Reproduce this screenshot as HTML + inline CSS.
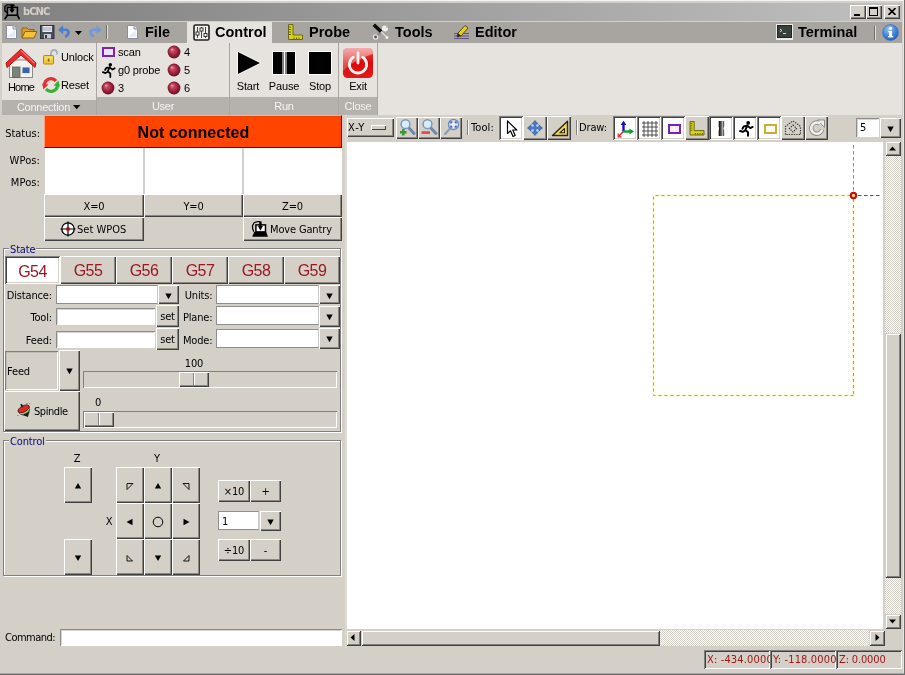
<!DOCTYPE html>
<html>
<head>
<meta charset="utf-8">
<title>bCNC</title>
<style>
html,body{margin:0;padding:0;}
body{width:905px;height:675px;overflow:hidden;background:#d4d0c8;font-family:"Liberation Sans",sans-serif;font-size:11px;color:#000;}
#win{position:relative;width:905px;height:675px;overflow:hidden;background:#d4d0c8;will-change:transform;}
#win div,#win span,#win svg{position:absolute;box-sizing:border-box;white-space:nowrap;}
.tah{font-family:"DejaVu Sans Condensed","Liberation Sans",sans-serif;font-size:11px;line-height:13px;letter-spacing:-0.15px;}
.ari{font-family:"Liberation Sans",sans-serif;font-size:11px;line-height:13px;letter-spacing:-0.15px;}
.btn{background:#d4d0c8;box-shadow:inset 1px 1px 0 #fff,inset -1px -1px 0 #404040,inset -2px -2px 0 #8c8880;}
.sunk{background:#fff;box-shadow:inset 1px 1px 0 #808080,inset -1px -1px 0 #fff,inset 2px 2px 0 #404040,inset -2px -2px 0 #d4d0c8;}
.sunkg{background:#d4d0c8;box-shadow:inset 1px 1px 0 #808080,inset -1px -1px 0 #fff,inset 2px 2px 0 #404040,inset -2px -2px 0 #d4d0c8;}
.entry{background:#fff;box-shadow:inset 1px 1px 0 #8c8c8c,inset -1px -1px 0 #fff,inset 2px 2px 0 #d8d5cf;}
.cb{background:#fff;border:1px solid #8e8e8e;border-right-color:#c8c8c8;}
.c{text-align:center;}
.r{text-align:right;}
.tab{font-family:"Liberation Sans",sans-serif;font-weight:bold;font-size:14.5px;line-height:17px;color:#000;}
.glab{font-family:"Liberation Sans",sans-serif;font-size:11px;line-height:13px;color:#f4f4f4;text-align:center;letter-spacing:-0.25px;}
.grp{border:1px solid #808080;box-shadow:inset 1px 1px 0 #fff,1px 1px 0 #fff;}
.grpl{color:#0a0a7a;background:#d4d0c8;padding:0 1px;}
.g5{font-family:"Liberation Sans",sans-serif;font-size:16px;line-height:18px;color:#9a1820;text-align:center;letter-spacing:-0.5px;}
.red{color:#a01818;}
.trough{background:#d4d0c8;box-shadow:inset 1px 1px 0 #808080,inset -1px -1px 0 #fff;}
.chk{background-color:#eae8e4;background-image:conic-gradient(#fff 25%,#d4d0c8 0 50%,#fff 0 75%,#d4d0c8 0);background-size:2px 2px;}
.sb{background:#d4d0c8;box-shadow:inset 1px 1px 0 #d4d0c8,inset -1px -1px 0 #404040,inset 2px 2px 0 #fff,inset -2px -2px 0 #808080;}
</style>
</head>
<body>
<div id="win">
<!-- TITLEBAR -->
<div id="title" style="left:2px;top:3px;width:900px;height:18px;background:linear-gradient(to right,#808080,#c0c0c0);"></div>
<span class="tah" style="left:23px;top:5px;font-weight:bold;font-size:11px;color:#d4d0c8;letter-spacing:-0.9px;">bCNC</span>
<svg style="left:4px;top:4px" width="16" height="16" viewBox="0 0 16 16"><path d="M3.3 8.6 L0.9 7 V2.6 L2.8 0.9 H9.6 L10.4 2.2" fill="none" stroke="#000" stroke-width="1.4" stroke-linejoin="round"/><rect x="3.4" y="3.4" width="10" height="7.8" fill="#8e8e8e" stroke="#000" stroke-width="1.6"/><path d="M6.6 0.8 H9.4 V5.4 H11 L8 9 L5 5.4 H6.6 Z" fill="#000"/><path d="M3.4 11.2 L0.6 15.2 M13.4 11.2 L15.4 15.2" stroke="#000" stroke-width="1.6"/></svg>
<div class="btn" style="left:850px;top:5px;width:16px;height:14px;"><div style="left:4px;top:9px;width:6px;height:2px;background:#000"></div></div>
<div class="btn" style="left:866px;top:5px;width:16px;height:14px;"><div style="left:3px;top:2px;width:9px;height:9px;border:1px solid #000;border-top:2px solid #000"></div></div>
<div class="btn" style="left:884px;top:5px;width:16px;height:14px;"><svg style="left:4px;top:3px" width="8" height="7" viewBox="0 0 8 7"><path d="M0.5 0 L7.5 7 M7.5 0 L0.5 7" stroke="#000" stroke-width="1.6"/></svg></div>
<!-- TABBAR -->
<div id="tabbar" style="left:2px;top:22px;width:900px;height:21px;background:#a8a5a1;"></div>
<!-- quick icons -->
<svg style="left:5px;top:25px" width="13" height="14" viewBox="0 0 13 14"><path d="M1.5 0.5 H8 L11.5 4 V13.5 H1.5 Z" fill="#fdfdff" stroke="#8a8fa0" stroke-width="1"/><path d="M8 0.5 V4 H11.5" fill="#dfe3ee" stroke="#8a8fa0" stroke-width="1"/><path d="M3 11 L10 5 V12 H3Z" fill="#dde2f0" opacity=".7"/></svg>
<svg style="left:21px;top:24px" width="17" height="15" viewBox="0 0 17 15"><path d="M9 2 C10 0.5 13 0.5 14 2.5" fill="none" stroke="#9aa0a8" stroke-width="1.2"/><path d="M1 14 V4 H6 L7.5 5.5 H13 V8" fill="#e0a020" stroke="#8a6408" stroke-width="1"/><path d="M1 14 L4 7.5 H16 L13 14 Z" fill="#f4c040" stroke="#8a6408" stroke-width="1"/></svg>
<svg style="left:40px;top:25px" width="15" height="14" viewBox="0 0 15 14"><rect x="0.5" y="0.5" width="13.5" height="13" fill="#4a4e58" stroke="#30333a"/><rect x="2.5" y="1" width="9.5" height="6" fill="#e8ecf2"/><path d="M3 3 H11.5 M3 5 H11.5" stroke="#9aa4b4" stroke-width="1"/><rect x="4" y="9" width="7" height="4.5" fill="#c8ccd4"/><rect x="5" y="10" width="2" height="3" fill="#30333a"/></svg>
<svg style="left:58px;top:25px" width="13" height="13" viewBox="0 0 13 13"><path d="M3.5 4.8 H7.5 C10.8 4.8 11.3 8.2 9.6 9.8 L7.2 12" fill="none" stroke="#4a7cd0" stroke-width="2.6"/><path d="M0 4.8 L5.2 0.3 V9.3 Z" fill="#4a7cd0"/></svg>
<svg style="left:75px;top:31px" width="8" height="5" viewBox="0 0 8 5"><path d="M0 0 H7 L3.5 4 Z" fill="#000"/></svg>
<svg style="left:87px;top:25px" width="15" height="13" viewBox="0 0 15 13"><path d="M10.5 4.8 H6.5 C3.2 4.8 2.7 8.2 4.4 9.8 L6.8 12" fill="none" stroke="#7398d8" stroke-width="2.6"/><path d="M14.8 4.8 L9.6 0.3 V9.3 Z" fill="#7398d8"/></svg>
<div style="left:106px;top:25px;width:1px;height:14px;background:#707070;"></div>
<div style="left:107px;top:25px;width:1px;height:14px;background:#e0e0e0;"></div>
<!-- tabs -->
<div style="left:187px;top:22px;width:85px;height:22px;background:#e6e3df;"></div>
<svg style="left:126px;top:25px" width="13" height="14" viewBox="0 0 13 14"><path d="M1.5 0.5 H8 L11.5 4 V13.5 H1.5 Z" fill="#fdfdff" stroke="#8a8fa0" stroke-width="1"/><path d="M8 0.5 V4 H11.5" fill="#dfe3ee" stroke="#8a8fa0" stroke-width="1"/><path d="M3 11 L10 5 V12 H3Z" fill="#dde2f0" opacity=".7"/></svg>
<span class="tab" style="left:145px;top:24px;">File</span>
<svg style="left:193px;top:24px" width="17" height="17" viewBox="0 0 17 17"><rect x="1" y="1" width="15" height="15" rx="1.5" fill="#f4f2ee" stroke="#222" stroke-width="1.6"/><path d="M4.5 3 V14 M8.5 3 V14 M12.5 3 V14" stroke="#444" stroke-width="1"/><rect x="3" y="8" width="3" height="3" fill="#fff" stroke="#222" stroke-width=".9"/><rect x="7" y="4" width="3" height="3" fill="#fff" stroke="#222" stroke-width=".9"/><rect x="11" y="9.5" width="3" height="3" fill="#fff" stroke="#222" stroke-width=".9"/></svg>
<span class="tab" style="left:215px;top:24px;">Control</span>
<svg style="left:288px;top:24px" width="15" height="16" viewBox="0 0 15 16"><path d="M0.5 0.5 H5 V11 H14.5 V15.5 H0.5 Z" fill="#d8d020" stroke="#6a6a10" stroke-width="1"/><path d="M1 3 H3 M1 5.5 H3 M1 8 H3 M1 10.5 H3 M6 13.5 V15 M8.5 13.5 V15 M11 13.5 V15" stroke="#5a5a10" stroke-width=".9"/></svg>
<span class="tab" style="left:309px;top:24px;">Probe</span>
<svg style="left:372px;top:23px" width="17" height="17" viewBox="0 0 17 17"><path d="M12.5 6 L4 13.5" stroke="#8a8a8a" stroke-width="2.2"/><circle cx="13" cy="5.5" r="3" fill="#f0f0f0"/><path d="M13.5 2 L16 4.5 L14.5 5 Z" fill="#a8a5a1"/><circle cx="3.6" cy="14" r="2.1" fill="#555" stroke="#e6e6e6" stroke-width="1.3"/><path d="M9 8.5 L14.8 14.3" stroke="#e4e4e4" stroke-width="1.2"/><circle cx="15" cy="14.6" r="1.4" fill="#f6f6f6"/><path d="M1.8 1.8 L9 8.5" stroke="#0c0c0c" stroke-width="3.6"/></svg>
<span class="tab" style="left:395px;top:24px;">Tools</span>
<svg style="left:453px;top:24px" width="17" height="17" viewBox="0 0 17 17"><path d="M1 9.5 H16 M1 12 H16 M1 14.5 H16" stroke="#5a4a8a" stroke-width=".9"/><path d="M4 13 L5 9 L12 1.5 L15 4 L8 12 Z" fill="#e8d020" stroke="#5a4a10" stroke-width="1"/><path d="M4 13 L5 9 L8 12 Z" fill="#222"/></svg>
<span class="tab" style="left:475px;top:24px;">Editor</span>
<svg style="left:776px;top:24px" width="17" height="16" viewBox="0 0 17 16"><rect x="0" y="0" width="17" height="16" fill="#eceae6"/><rect x="1.5" y="1.5" width="14" height="12" fill="#38403c" stroke="#202420" stroke-width="1"/><path d="M4 5 L6 6.5 L4 8 M7 9.5 H10" fill="none" stroke="#d0e0d0" stroke-width="1"/></svg>
<span class="tab" style="left:798px;top:24px;">Terminal</span>
<div style="left:874px;top:26px;width:1px;height:14px;background:#707070;"></div>
<div style="left:875px;top:26px;width:1px;height:14px;background:#e0e0e0;"></div>
<svg style="left:882px;top:24px" width="17" height="17" viewBox="0 0 17 17"><defs><radialGradient id="ig" cx=".4" cy=".3" r=".8"><stop offset="0" stop-color="#9cc4f4"/><stop offset=".6" stop-color="#3a7cd8"/><stop offset="1" stop-color="#2058b0"/></radialGradient></defs><circle cx="8.5" cy="8.5" r="8" fill="url(#ig)" stroke="#3a70c0" stroke-width=".6"/><rect x="7.2" y="7" width="2.8" height="6" fill="#fff"/><rect x="6.2" y="7" width="2" height="1.3" fill="#fff"/><rect x="6" y="12" width="5.2" height="1.4" fill="#fff"/><circle cx="8.5" cy="4.3" r="1.6" fill="#fff"/></svg>
<!-- RIBBON -->
<div id="ribbon" style="left:2px;top:43px;width:900px;height:72px;background:#e6e3df;"></div>
<!-- ribbon groups -->
<svg width="0" height="0" style="left:0;top:0"><defs><radialGradient id="bg" cx=".5" cy=".5" r=".56" fx=".33" fy=".28"><stop offset="0" stop-color="#f0b0bc"/><stop offset=".22" stop-color="#cc5068"/><stop offset=".55" stop-color="#a82840"/><stop offset=".82" stop-color="#761830"/><stop offset="1" stop-color="#401018"/></radialGradient></defs></svg>
<div style="left:2px;top:100px;width:94px;height:15px;background:#b5b2ae;"></div>
<div style="left:97px;top:97px;width:281px;height:18px;background:#b5b2ae;"></div>
<div style="left:96px;top:43px;width:1px;height:72px;background:#aaa7a3;"></div>
<div style="left:229px;top:43px;width:1px;height:72px;background:#aaa7a3;"></div>
<div style="left:338px;top:43px;width:1px;height:72px;background:#aaa7a3;"></div>
<div style="left:377px;top:43px;width:1px;height:72px;background:#aaa7a3;"></div>
<span class="glab" style="left:1px;top:101px;width:85px;">Connection</span>
<svg style="left:73px;top:105px" width="8" height="5" viewBox="0 0 8 5"><path d="M0 0 H7.4 L3.7 4.2 Z" fill="#000"/></svg>
<span class="glab" style="left:97px;top:100px;width:132px;">User</span>
<span class="glab" style="left:230px;top:100px;width:108px;">Run</span>
<span class="glab" style="left:339px;top:100px;width:38px;">Close</span>
<!-- Connection -->
<svg style="left:5px;top:47px" width="32" height="32" viewBox="0 0 32 32"><rect x="4.5" y="13" width="23" height="17.5" fill="#f4f3ef" stroke="#8a8a86" stroke-width="1"/><rect x="7.5" y="20" width="7.5" height="10.5" fill="#7a8478" stroke="#5a6258" stroke-width=".8"/><rect x="17" y="20" width="8" height="6.5" fill="#3a64a8" stroke="#dfe6f0" stroke-width="1"/><path d="M16 2 L31 16 L30 20.5 L16 8 L2 20.5 L1 16 Z" fill="#e42c2c" stroke="#b41818" stroke-width="1" stroke-linejoin="round"/><path d="M16 3.5 L29.5 16.2" stroke="#f47878" stroke-width="1.2" fill="none"/></svg>
<span class="ari" style="left:5px;top:80.5px;width:32px;text-align:center;letter-spacing:-0.8px;">Home</span>
<svg style="left:42px;top:48px" width="18" height="17" viewBox="0 0 18 17"><path d="M9 8 V5 C9 1 15 1 15 5 V6.5" fill="none" stroke="#a8b0bc" stroke-width="1.8"/><rect x="1.5" y="7.5" width="10" height="8.5" rx="1" fill="#f0c838" stroke="#b08810" stroke-width="1"/><rect x="2.5" y="8.5" width="8" height="3" fill="#f8e070" opacity=".8"/><rect x="5.8" y="10.5" width="1.6" height="3" fill="#8a6a10"/></svg>
<span class="ari" style="left:61px;top:50.5px;">Unlock</span>
<svg style="left:42px;top:76px" width="18" height="18" viewBox="0 0 18 18"><path d="M2.5 9 A6.5 6.5 0 0 1 14 5" fill="none" stroke="#e03030" stroke-width="3.2"/><path d="M0 7.5 L6.5 8.5 L1.5 13.5 Z" fill="#e03030"/><path d="M15.5 9 A6.5 6.5 0 0 1 4 13" fill="none" stroke="#38b038" stroke-width="3.2"/><path d="M18 10.5 L11.5 9.5 L16.5 4.5 Z" fill="#38b038"/></svg>
<span class="ari" style="left:61px;top:79px;">Reset</span>
<!-- User -->
<div style="left:102px;top:47px;width:13px;height:10px;border:2px solid #7a22b4;background:#ece4f2;"></div>
<span class="ari" style="left:118px;top:46px;">scan</span>
<svg style="left:102px;top:62px" width="14" height="16" viewBox="0 0 16 17"><circle cx="9.5" cy="2.5" r="2" fill="#000"/><path d="M9 5 L6.5 10 L9.5 12.5 L9.5 16.5 M7 10.5 L4 12 L1 11 M8.5 5.5 L5 6 L3.5 8.5 M9.5 6 L12 8 L14.5 6.5" fill="none" stroke="#000" stroke-width="2" stroke-linecap="round" stroke-linejoin="round"/></svg>
<span class="ari" style="left:118px;top:64px;">g0 probe</span>
<svg style="left:101px;top:81px" width="14" height="14" viewBox="0 0 14 14"><circle cx="7" cy="7" r="6.4" fill="url(#bg)"/></svg>
<span class="ari" style="left:118px;top:82px;">3</span>
<svg style="left:167px;top:45px" width="14" height="14" viewBox="0 0 14 14"><circle cx="7" cy="7" r="6.4" fill="url(#bg)"/></svg>
<span class="ari" style="left:184px;top:46px;">4</span>
<svg style="left:167px;top:63px" width="14" height="14" viewBox="0 0 14 14"><circle cx="7" cy="7" r="6.4" fill="url(#bg)"/></svg>
<span class="ari" style="left:184px;top:64px;">5</span>
<svg style="left:167px;top:81px" width="14" height="14" viewBox="0 0 14 14"><circle cx="7" cy="7" r="6.4" fill="url(#bg)"/></svg>
<span class="ari" style="left:184px;top:82px;">6</span>
<!-- Run -->
<svg style="left:236px;top:50px" width="26" height="26" viewBox="0 0 26 26"><path d="M2 2 L24 13 L2 24 Z" fill="#000" stroke="#fff" stroke-width="1.4" stroke-linejoin="round" paint-order="stroke"/></svg>
<span class="ari" style="left:232px;top:80px;width:32px;text-align:center;">Start</span>
<div style="left:272px;top:51px;width:24px;height:24px;background:#fff;"></div>
<div style="left:273px;top:52px;width:9px;height:22px;background:#000;"></div>
<div style="left:282px;top:52px;width:2px;height:22px;background:#808080;"></div>
<div style="left:285px;top:52px;width:2px;height:22px;background:#808080;"></div>
<div style="left:287px;top:52px;width:8px;height:22px;background:#000;"></div>
<span class="ari" style="left:264px;top:80px;width:40px;text-align:center;">Pause</span>
<div style="left:308px;top:51px;width:24px;height:24px;background:#fff;"></div>
<div style="left:309px;top:52px;width:22px;height:22px;background:#000;"></div>
<span class="ari" style="left:304px;top:80px;width:32px;text-align:center;">Stop</span>
<!-- Close -->
<svg style="left:342px;top:47px" width="32" height="32" viewBox="0 0 32 32"><defs><linearGradient id="eg" x1="0" y1="0" x2="0" y2="1"><stop offset="0" stop-color="#e84848"/><stop offset=".5" stop-color="#dc0808"/><stop offset="1" stop-color="#e01c1c"/></linearGradient><linearGradient id="eg2" x1="0" y1="0" x2="0" y2="1"><stop offset="0" stop-color="#fff" stop-opacity=".55"/><stop offset="1" stop-color="#fff" stop-opacity=".18"/></linearGradient></defs><rect x="1" y="1" width="30" height="30" rx="4.5" fill="url(#eg)"/><path d="M1 5.5 Q1 1 5.5 1 H26.5 Q31 1 31 5.5 V7 C24 9 10 15 1 24 Z" fill="url(#eg2)"/><path d="M11.3 10.2 A8.6 8.6 0 1 0 20.7 10.2" fill="none" stroke="#fff4f0" stroke-width="2.8" stroke-linecap="round"/><path d="M16 6 V16" stroke="#fff4f0" stroke-width="2.8" stroke-linecap="round"/></svg>
<span class="ari" style="left:342px;top:80px;width:32px;text-align:center;">Exit</span>
<!-- LEFT -->
<!-- status block -->
<span class="tah" style="left:0px;top:127px;width:40px;text-align:right;letter-spacing:0px;">Status:</span>
<span class="tah" style="left:0px;top:154px;width:40px;text-align:right;letter-spacing:0.1px;">WPos:</span>
<span class="tah" style="left:0px;top:176px;width:40px;text-align:right;letter-spacing:0.1px;">MPos:</span>
<div style="left:44px;top:115px;width:298px;height:33px;background:#ff4500;border-top:1px solid #ffb090;border-left:1px solid #ffa078;border-right:1px solid #5a1800;border-bottom:1px solid #3a1000;box-shadow:inset 0 1px 0 #f04000;"></div>
<span style="left:45px;top:124px;width:297px;text-align:center;font-weight:bold;font-size:16px;line-height:18px;letter-spacing:0.05px;">Not connected</span>
<div style="left:45px;top:148px;width:297px;height:47px;background:#fff;"></div>
<div style="left:143px;top:148px;width:2px;height:47px;background:#d0d0d0;"></div>
<div style="left:242px;top:148px;width:2px;height:47px;background:#d0d0d0;"></div>
<div class="btn tah c" style="left:44px;top:194px;width:100px;height:23px;padding-top:6px;">X=0</div>
<div class="btn tah c" style="left:144px;top:194px;width:99px;height:23px;padding-top:6px;">Y=0</div>
<div class="btn tah c" style="left:243px;top:194px;width:99px;height:23px;padding-top:6px;">Z=0</div>
<div class="btn" style="left:44px;top:217px;width:100px;height:24px;"></div>
<svg style="left:60px;top:221px" width="16" height="16" viewBox="0 0 16 16"><circle cx="8" cy="8" r="6.2" fill="#fff" stroke="#000" stroke-width="1.3"/><path d="M8 0.5 V15.5 M0.5 8 H15.5" stroke="#000" stroke-width="1.2"/><circle cx="8" cy="8" r="2.1" fill="#a01818"/></svg>
<span class="tah" style="left:77px;top:223px;letter-spacing:0px;">Set WPOS</span>
<div class="btn" style="left:243px;top:217px;width:99px;height:24px;"></div>
<svg style="left:251px;top:220px" width="18" height="17" viewBox="0 0 18 17"><path d="M2.8 11.8 C0.6 7.5 0.8 2 6.8 1.6 H9.4" fill="none" stroke="#000" stroke-width="1.3"/><rect x="4.9" y="4.9" width="9.6" height="7" fill="#fff" stroke="#000" stroke-width="1.5"/><path d="M8.2 1.4 H10.6 V6 H11.9 L9.4 10.8 L6.9 6 H8.2 Z" fill="#000"/><path d="M3.2 12 H15.2 L17 16.8 H1.2 Z" fill="#000"/></svg>
<span class="tah" style="left:270px;top:223px;">Move Gantry</span>
<!-- State group -->
<div class="grp" style="left:3px;top:248px;width:338px;height:184px;"></div>
<span class="tah grpl" style="left:9px;top:243px;">State</span>
<div class="sunk" style="left:5px;top:256px;width:55px;height:28px;"></div>
<div class="btn" style="left:60px;top:256px;width:56px;height:28px;"></div>
<div class="btn" style="left:116px;top:256px;width:56px;height:28px;"></div>
<div class="btn" style="left:172px;top:256px;width:56px;height:28px;"></div>
<div class="btn" style="left:228px;top:256px;width:56px;height:28px;"></div>
<div class="btn" style="left:284px;top:256px;width:56px;height:28px;"></div>
<span class="g5" style="left:5px;top:263px;width:55px;">G54</span>
<span class="g5" style="left:60px;top:261.5px;width:56px;">G55</span>
<span class="g5" style="left:116px;top:261.5px;width:56px;">G56</span>
<span class="g5" style="left:172px;top:261.5px;width:56px;">G57</span>
<span class="g5" style="left:228px;top:261.5px;width:56px;">G58</span>
<span class="g5" style="left:284px;top:261.5px;width:56px;">G59</span>
<span class="tah r" style="left:0px;top:289px;width:52px;">Distance:</span>
<span class="tah r" style="left:0px;top:311px;width:52px;">Tool:</span>
<span class="tah r" style="left:0px;top:334px;width:52px;">Feed:</span>
<div class="cb" style="left:56px;top:285px;width:102px;height:19px;"></div>
<div class="btn" style="left:158px;top:285px;width:21px;height:19px;"><svg style="left:7px;top:8px" width="7" height="7" viewBox="0 0 7 7"><path d="M0.3 0.5 H6.7 L3.5 6.3 Z" fill="#000"/></svg></div>
<div class="entry" style="left:56px;top:308px;width:99px;height:17px;"></div>
<div class="btn tah c" style="left:156px;top:305px;width:23px;height:22px;padding-top:5px;">set</div>
<div class="entry" style="left:56px;top:331px;width:99px;height:17px;"></div>
<div class="btn tah c" style="left:156px;top:328px;width:23px;height:22px;padding-top:5px;">set</div>
<span class="tah r" style="left:171.5px;top:289px;width:41px;">Units:</span>
<span class="tah r" style="left:171.5px;top:311px;width:41px;">Plane:</span>
<span class="tah r" style="left:171.5px;top:334px;width:41px;">Mode:</span>
<div class="cb" style="left:216px;top:285px;width:103px;height:19px;"></div>
<div class="btn" style="left:319px;top:285px;width:21px;height:19px;"><svg style="left:7px;top:8px" width="7" height="7" viewBox="0 0 7 7"><path d="M0.3 0.5 H6.7 L3.5 6.3 Z" fill="#000"/></svg></div>
<div class="cb" style="left:216px;top:306px;width:103px;height:19px;"></div>
<div class="btn" style="left:319px;top:306px;width:21px;height:21px;"><svg style="left:7px;top:8px" width="7" height="7" viewBox="0 0 7 7"><path d="M0.3 0.5 H6.7 L3.5 6.3 Z" fill="#000"/></svg></div>
<div class="cb" style="left:216px;top:329px;width:103px;height:19px;"></div>
<div class="btn" style="left:319px;top:328px;width:21px;height:21px;"><svg style="left:7px;top:8px" width="7" height="7" viewBox="0 0 7 7"><path d="M0.3 0.5 H6.7 L3.5 6.3 Z" fill="#000"/></svg></div>
<div style="left:5px;top:351px;width:53px;height:39px;background:#d4d0c8;box-shadow:inset 1px 1px 0 #808080,inset -1px -1px 0 #fff,inset 2px 2px 0 #c0bcb4;"></div>
<span class="tah" style="left:7px;top:365px;">Feed</span>
<div class="btn" style="left:59px;top:350px;width:21px;height:41px;"><svg style="left:7px;top:18px" width="7" height="7" viewBox="0 0 7 7"><path d="M0.3 0.5 H6.7 L3.5 6.3 Z" fill="#000"/></svg></div>
<div class="btn" style="left:4px;top:391px;width:76px;height:40px;"></div>
<svg style="left:16px;top:402px" width="17" height="17" viewBox="0 0 17 17"><g transform="rotate(-28 8.5 8.5)"><path d="M2.2 7.5 C2.5 11 6 12.5 8.5 16 C11 12.5 14.5 11 14.8 7.5 Z" fill="#1a1a1a"/><ellipse cx="8.5" cy="9.6" rx="4.6" ry="2.4" fill="#3058b8"/><ellipse cx="8.5" cy="8.9" rx="5.2" ry="2.6" fill="#38a848"/><ellipse cx="8.5" cy="8.2" rx="5.7" ry="2.8" fill="#f0d860"/><ellipse cx="8.5" cy="7.5" rx="6" ry="2.9" fill="#f09040"/><ellipse cx="8.5" cy="6.6" rx="6.2" ry="3" fill="#e02828" stroke="#301010" stroke-width=".7"/><rect x="7.6" y="1.2" width="1.8" height="3.4" fill="#1a1a1a"/></g><path d="M10 1.5 H12 M13 1.5 H14.5 M1 13.5 H2.8" stroke="#40c060" stroke-width=".9"/></svg>
<span class="tah" style="left:34px;top:405px;letter-spacing:-0.45px;">Spindle</span>
<span class="tah c" style="left:174px;top:357px;width:40px;">100</span>
<div class="trough" style="left:83px;top:371px;width:254px;height:17px;"></div>
<div class="btn" style="left:179px;top:372px;width:30px;height:15px;"></div>
<div style="left:193px;top:373px;width:1px;height:12px;background:#808080;"></div>
<div style="left:194px;top:373px;width:1px;height:12px;background:#fff;"></div>
<span class="tah c" style="left:88px;top:396px;width:20px;">0</span>
<div class="trough" style="left:83px;top:411px;width:254px;height:17px;"></div>
<div class="btn" style="left:84px;top:412px;width:30px;height:15px;"></div>
<div style="left:98px;top:413px;width:1px;height:12px;background:#808080;"></div>
<div style="left:99px;top:413px;width:1px;height:12px;background:#fff;"></div>
<!-- Control group -->
<div class="grp" style="left:3px;top:440px;width:338px;height:136px;"></div>
<span class="tah grpl" style="left:9px;top:435px;">Control</span>
<span class="tah c" style="left:67px;top:452px;width:20px;">Z</span>
<span class="tah c" style="left:147px;top:452px;width:20px;">Y</span>
<span class="tah c" style="left:99px;top:515px;width:20px;">X</span>
<div class="btn" style="left:116px;top:467px;width:28px;height:36px;"></div>
<svg style="left:124px;top:480px" width="12" height="12" viewBox="0 0 12 12"><path d="M3 3.5 H9 L3 9.5 Z" fill="none" stroke="#000" stroke-width="0.9"/></svg>
<div class="btn" style="left:144px;top:467px;width:28px;height:36px;"></div>
<svg style="left:152px;top:480px" width="12" height="12" viewBox="0 0 12 12"><path d="M6 3 L9.2 8.5 H2.8 Z" fill="#000" stroke="none" stroke-width="0.9"/></svg>
<div class="btn" style="left:172px;top:467px;width:28px;height:36px;"></div>
<svg style="left:180px;top:480px" width="12" height="12" viewBox="0 0 12 12"><path d="M9 3.5 H3 L9 9.5 Z" fill="none" stroke="#000" stroke-width="0.9"/></svg>
<div class="btn" style="left:116px;top:503px;width:28px;height:36px;"></div>
<svg style="left:124px;top:516px" width="12" height="12" viewBox="0 0 12 12"><path d="M2.5 6 L8.5 2.8 V9.2 Z" fill="#000" stroke="none" stroke-width="0.9"/></svg>
<div class="btn" style="left:144px;top:503px;width:28px;height:36px;"></div>
<svg style="left:151px;top:515px" width="14" height="14" viewBox="0 0 14 14"><circle cx="7" cy="7" r="4.8" fill="none" stroke="#000" stroke-width="1"/></svg>
<div class="btn" style="left:172px;top:503px;width:28px;height:36px;"></div>
<svg style="left:180px;top:516px" width="12" height="12" viewBox="0 0 12 12"><path d="M9.5 6 L3.5 2.8 V9.2 Z" fill="#000" stroke="none" stroke-width="0.9"/></svg>
<div class="btn" style="left:116px;top:539px;width:28px;height:36px;"></div>
<svg style="left:124px;top:552px" width="12" height="12" viewBox="0 0 12 12"><path d="M3 9 V3.5 L8.5 9 Z" fill="none" stroke="#000" stroke-width="0.9"/></svg>
<div class="btn" style="left:144px;top:539px;width:28px;height:36px;"></div>
<svg style="left:152px;top:552px" width="12" height="12" viewBox="0 0 12 12"><path d="M6 9 L9.2 3.5 H2.8 Z" fill="#000" stroke="none" stroke-width="0.9"/></svg>
<div class="btn" style="left:172px;top:539px;width:28px;height:36px;"></div>
<svg style="left:180px;top:552px" width="12" height="12" viewBox="0 0 12 12"><path d="M9 9 V3.5 L3.5 9 Z" fill="none" stroke="#000" stroke-width="0.9"/></svg>
<div class="btn" style="left:64px;top:467px;width:28px;height:36px;"></div>
<svg style="left:72px;top:480px" width="12" height="12" viewBox="0 0 12 12"><path d="M6 3 L9.2 8.5 H2.8 Z" fill="#000" stroke="none" stroke-width="0.9"/></svg>
<div class="btn" style="left:64px;top:539px;width:28px;height:36px;"></div>
<svg style="left:72px;top:552px" width="12" height="12" viewBox="0 0 12 12"><path d="M6 9 L9.2 3.5 H2.8 Z" fill="#000" stroke="none" stroke-width="0.9"/></svg>

<div class="btn tah c" style="left:218px;top:480px;width:32px;height:22px;padding-top:5px;">×10</div>
<div class="btn tah c" style="left:250px;top:480px;width:31px;height:22px;padding-top:5px;">+</div>
<div class="cb" style="left:218px;top:511px;width:41px;height:19px;"></div>
<span class="tah" style="left:222px;top:515px;">1</span>
<div class="btn" style="left:260px;top:511px;width:21px;height:20px;"><svg style="left:7px;top:8px" width="7" height="7" viewBox="0 0 7 7"><path d="M0.3 0.5 H6.7 L3.5 6.3 Z" fill="#000"/></svg></div>
<div class="btn tah c" style="left:218px;top:539px;width:32px;height:22px;padding-top:5px;">÷10</div>
<div class="btn tah c" style="left:250px;top:539px;width:31px;height:22px;padding-top:5px;">-</div>
<!-- command -->
<span class="tah" style="left:5px;top:631px;letter-spacing:-0.5px;">Command:</span>
<div class="entry" style="left:60px;top:629px;width:282px;height:17px;"></div>
<!-- CANVAS -->
<!-- canvas toolbar -->
<div class="btn" style="left:347px;top:118px;width:47px;height:19px;"></div>
<span class="tah" style="left:348px;top:121px;letter-spacing:0.9px;">X-Y</span>
<div style="left:371px;top:125px;width:15px;height:5px;background:#d4d0c8;box-shadow:inset 1px 1px 0 #fff,inset -1px -1px 0 #404040;"></div>
<div class="btn" style="left:396px;top:117px;width:22px;height:22px;"></div>
<div class="btn" style="left:418px;top:117px;width:22px;height:22px;"></div>
<div class="btn" style="left:440px;top:117px;width:22px;height:22px;"></div>
<svg style="left:399px;top:118px" width="17" height="18" viewBox="0 0 17 18"><path d="M9.5 9.5 L15 15.5" stroke="#7088a8" stroke-width="3" stroke-linecap="round"/><circle cx="6.5" cy="6.2" r="4.4" fill="#d8ecfa" stroke="#7a98c0" stroke-width="1.5"/><path d="M1 14.3 H7.6 M4.3 11 V17.6" stroke="#3a9a3a" stroke-width="2.6"/></svg>
<svg style="left:421px;top:118px" width="17" height="18" viewBox="0 0 17 18"><path d="M9.5 9.5 L15 15.5" stroke="#7088a8" stroke-width="3" stroke-linecap="round"/><circle cx="6.5" cy="6.2" r="4.4" fill="#d8ecfa" stroke="#7a98c0" stroke-width="1.5"/><path d="M0.5 14.6 H9" stroke="#e04848" stroke-width="2.6"/></svg>
<svg style="left:443px;top:118px" width="17" height="18" viewBox="0 0 17 18"><path d="M7.5 10 L2 16" stroke="#8a9ab4" stroke-width="2" stroke-linecap="round"/><circle cx="10.5" cy="6.5" r="5" fill="#e8f0fc" stroke="#6a88c8" stroke-width="1.4"/><path d="M8 5.5 V4 H9.5 M11.5 4 H13 V5.5 M13 7.5 V9 H11.5 M9.5 9 H8 V7.5" fill="none" stroke="#203890" stroke-width="1.2"/></svg>
<div style="left:467px;top:120px;width:1px;height:15px;background:#808080;"></div>
<div style="left:468px;top:120px;width:1px;height:15px;background:#fff;"></div>
<span class="tah" style="left:471px;top:121px;letter-spacing:0.1px;">Tool:</span>
<div class="sunk" style="left:499px;top:116px;width:24px;height:24px;"></div>
<svg style="left:506px;top:120px" width="13" height="18" viewBox="0 0 13 18"><path d="M1.5 1 V13.5 L4.5 10.8 L7 16.5 L9.2 15.5 L6.8 10 H10.8 Z" fill="#fff" stroke="#000" stroke-width="1.2" stroke-linejoin="round"/></svg>
<div class="btn" style="left:523px;top:116px;width:24px;height:24px;"></div>
<svg style="left:527px;top:120px" width="16" height="16" viewBox="0 0 16 16"><path d="M8 0.5 L11.2 4.2 H9.3 V6.7 H11.8 V4.8 L15.5 8 L11.8 11.2 V9.3 H9.3 V11.8 H11.2 L8 15.5 L4.8 11.8 H6.7 V9.3 H4.2 V11.2 L0.5 8 L4.2 4.8 V6.7 H6.7 V4.2 H4.8 Z" fill="#4a78c4" stroke="#3a5c9c" stroke-width=".7"/><circle cx="5.6" cy="5.6" r="1.3" fill="#a8d0f8"/><circle cx="10.4" cy="5.6" r="1.3" fill="#a8d0f8"/><circle cx="5.6" cy="10.4" r="1.3" fill="#a8d0f8"/><circle cx="10.4" cy="10.4" r="1.3" fill="#a8d0f8"/></svg>
<div class="btn" style="left:547px;top:116px;width:24px;height:24px;"></div>
<svg style="left:551px;top:120px" width="18" height="17" viewBox="0 0 18 17"><path d="M16.5 1.2 V15.5 H1.5 Z" fill="#f4dc3c" stroke="#282410" stroke-width="1.4" stroke-linejoin="round"/><path d="M13.5 8.5 V12.8 H8.8 Z" fill="#e8d8c0" stroke="#282410" stroke-width="1.1" stroke-linejoin="round"/></svg>
<div style="left:576px;top:120px;width:1px;height:15px;background:#808080;"></div>
<div style="left:577px;top:120px;width:1px;height:15px;background:#fff;"></div>
<span class="tah" style="left:579px;top:121px;">Draw:</span>
<div class="sunk" style="left:613px;top:116px;width:24px;height:24px;"></div>
<svg style="left:617px;top:120px" width="18" height="18" viewBox="0 0 18 18"><path d="M6.5 11.5 V3" stroke="#1010c8" stroke-width="2.4"/><path d="M3.6 5 L6.5 0.8 L9.4 5 Z" fill="#1010c8"/><path d="M6.5 11.5 H13.5" stroke="#10a030" stroke-width="2.4"/><path d="M12.5 8.6 L17 11.5 L12.5 14.4 Z" fill="#10a030"/><path d="M6.5 11.5 L2 16" stroke="#e02020" stroke-width="1.5"/><path d="M1.2 13.5 V16.8 H4.5" fill="none" stroke="#e02020" stroke-width="1.2"/></svg>
<div class="sunk" style="left:637px;top:116px;width:24px;height:24px;"></div>
<svg style="left:641px;top:120px" width="18" height="18" viewBox="0 0 18 18"><path d="M3 1 V17 M7 1 V17 M11 1 V17 M15 1 V17 M1 3 H17 M1 7 H17 M1 11 H17 M1 15 H17" stroke="#404040" stroke-width="0.9"/></svg>
<div class="sunk" style="left:661px;top:116px;width:24px;height:24px;"></div>
<div style="left:668px;top:124px;width:13px;height:10px;border:2px solid #7a22b4;background:#f6f0fa;"></div>
<div class="btn" style="left:685px;top:116px;width:24px;height:24px;"></div>
<svg style="left:689px;top:121px" width="16" height="15" viewBox="0 0 16 15"><path d="M1 0.5 H5.2 V9.6 H15 V14 H1 Z" fill="#d8d020" stroke="#6a6a10" stroke-width="1"/><path d="M1.5 2.5 H3.3 M1.5 4.8 H3.3 M1.5 7.1 H3.3 M1.5 9.4 H3.3 M6.5 12 V13.6 M8.8 12 V13.6 M11.1 12 V13.6 M13.4 12 V13.6" stroke="#5a5a10" stroke-width=".9"/></svg>
<div class="sunk" style="left:709px;top:116px;width:24px;height:24px;"></div>
<svg style="left:718px;top:121px" width="7" height="15" viewBox="0 0 7 15"><path d="M0.5 0 H6.2 V5.5 L5.4 7.5 L6.2 9.5 V15 H0.5 V9.5 L1.3 7.5 L0.5 5.5 Z" fill="#606060"/><path d="M1.7 0 V15" stroke="#1c1c1c" stroke-width="1.4"/><path d="M4.4 0 V15" stroke="#b4b4b4" stroke-width="1.1"/></svg>
<div class="sunk" style="left:733px;top:116px;width:24px;height:24px;"></div>
<svg style="left:739px;top:120px" width="15" height="17" viewBox="0 0 16 17"><circle cx="9.8" cy="2.6" r="2" fill="#000"/><path d="M9 5.2 L6.8 10 L9.6 12.5 L9.6 16.3 M7 10.5 L4 12 L1.2 11.2 M8.5 5.6 L5.2 6.2 L3.8 8.6 M9.5 6 L12 8 L14.5 6.8" fill="none" stroke="#000" stroke-width="2.1" stroke-linecap="round" stroke-linejoin="round"/></svg>
<div class="sunk" style="left:757px;top:116px;width:24px;height:24px;"></div>
<div style="left:764px;top:124px;width:13px;height:10px;border:2px solid #c8b038;background:#fffef2;"></div>
<div class="btn" style="left:781px;top:116px;width:24px;height:24px;"></div>
<svg style="left:784px;top:119px" width="19" height="18" viewBox="0 0 19 18"><path d="M1.5 15.5 V7.5 L9 2 L16.5 7.5 V15.5 Z" fill="none" stroke="#303030" stroke-width="1.2" stroke-dasharray="1.3 1.2"/><path d="M9 6 L12.5 9.5 L9 13 L5.5 9.5 Z" fill="none" stroke="#303030" stroke-width="1.1" stroke-dasharray="1.3 1.1"/></svg>
<div class="btn" style="left:805px;top:116px;width:23px;height:24px;"></div>
<svg style="left:808px;top:119px" width="18" height="18" viewBox="0 0 18 18"><path d="M12 4.6 A5.6 5.6 0 1 0 14.2 10.5" fill="none" stroke="#8c8c8c" stroke-width="4.4"/><path d="M9.5 1 H16.5 V8.5 Z" fill="#f2f0ec" stroke="#8c8c8c" stroke-width="1"/><path d="M12 4.6 A5.6 5.6 0 1 0 14.2 10.5" fill="none" stroke="#f2f0ec" stroke-width="2.6"/></svg>
<div class="entry" style="left:856px;top:118px;width:23px;height:19px;"></div>
<span class="tah" style="left:860px;top:121px;">5</span>
<div class="btn" style="left:880px;top:118px;width:21px;height:20px;"><svg style="left:7px;top:8px" width="7" height="7" viewBox="0 0 7 7"><path d="M0.3 0.5 H6.7 L3.5 6.3 Z" fill="#000"/></svg></div>
<!-- canvas -->
<div style="left:345px;top:115px;width:2px;height:533px;background:#dddad3;"></div>
<div style="left:347px;top:142px;width:536px;height:487px;background:#fff;"></div>
<svg style="left:347px;top:142px" width="536" height="487" viewBox="347 142 536 487"><path d="M853.5 145 V191" stroke="#38c850" stroke-width="1" stroke-dasharray="3.5 2.5"/><path d="M858 195.5 H881" stroke="#a83030" stroke-width="1" stroke-dasharray="3.5 2.5"/><path d="M653.5 195.5 H853.5 V395.5 H653.5 Z" fill="none" stroke="#fff2b8" stroke-width="3" opacity=".4"/><path d="M853.5 395.5 H653.5 V195.5 H853.5" fill="none" stroke="#c4a030" stroke-width="1" stroke-dasharray="3 3"/><path d="M853.5 199 V395.5" fill="none" stroke="#dc8c30" stroke-width="1" stroke-dasharray="3 3"/><circle cx="853.5" cy="195.5" r="2.7" fill="#f0d890" stroke="#cc0808" stroke-width="2"/></svg>
<!-- v scrollbar -->
<div class="chk" style="left:885px;top:141px;width:16px;height:488px;"></div>
<div class="sb" style="left:885px;top:141px;width:16px;height:15px;"><svg style="left:4px;top:5px" width="8" height="5" viewBox="0 0 8 5"><path d="M0 4.5 H7 L3.5 0.5 Z" fill="#000"/></svg></div>
<div class="sb" style="left:885px;top:333px;width:16px;height:245px;"></div>
<div class="sb" style="left:885px;top:614px;width:16px;height:15px;"><svg style="left:4px;top:5px" width="8" height="5" viewBox="0 0 8 5"><path d="M0 0.5 H7 L3.5 4.5 Z" fill="#000"/></svg></div>
<!-- h scrollbar -->
<div class="chk" style="left:346px;top:630px;width:539px;height:16px;"></div>
<div class="sb" style="left:346px;top:630px;width:15px;height:16px;"><svg style="left:4px;top:4px" width="5" height="8" viewBox="0 0 5 8"><path d="M4.5 0 V7 L0.5 3.5 Z" fill="#000"/></svg></div>
<div class="sb" style="left:361px;top:630px;width:299px;height:16px;"></div>
<div class="sb" style="left:869px;top:630px;width:16px;height:16px;"><svg style="left:6px;top:4px" width="5" height="8" viewBox="0 0 5 8"><path d="M0.5 0 V7 L4.5 3.5 Z" fill="#000"/></svg></div>
<!-- STATUS -->
<div class="sunkg" style="left:704px;top:650px;width:66px;height:19px;overflow:hidden;"><span class="tah red" style="left:3px;top:3px;letter-spacing:0.15px;">X: -434.0000</span></div>
<div class="sunkg" style="left:770px;top:650px;width:66px;height:19px;overflow:hidden;"><span class="tah red" style="left:3px;top:3px;letter-spacing:0.15px;">Y: -118.0000</span></div>
<div class="sunkg" style="left:836px;top:650px;width:66px;height:19px;overflow:hidden;"><span class="tah red" style="left:3px;top:3px;">Z: 0.0000</span></div>
<!-- frame -->
<div style="left:0;top:0;width:905px;height:1px;background:#f4f4f2;"></div>
<div style="left:904px;top:0;width:1px;height:675px;background:#707070;"></div><div style="left:903px;top:1px;width:1px;height:673px;background:#e8e6e2;"></div>
<div style="left:0;top:674px;width:905px;height:1px;background:#707070;"></div><div style="left:0;top:673px;width:904px;height:1px;background:#a8a6a2;"></div>

</div>
</body>
</html>
